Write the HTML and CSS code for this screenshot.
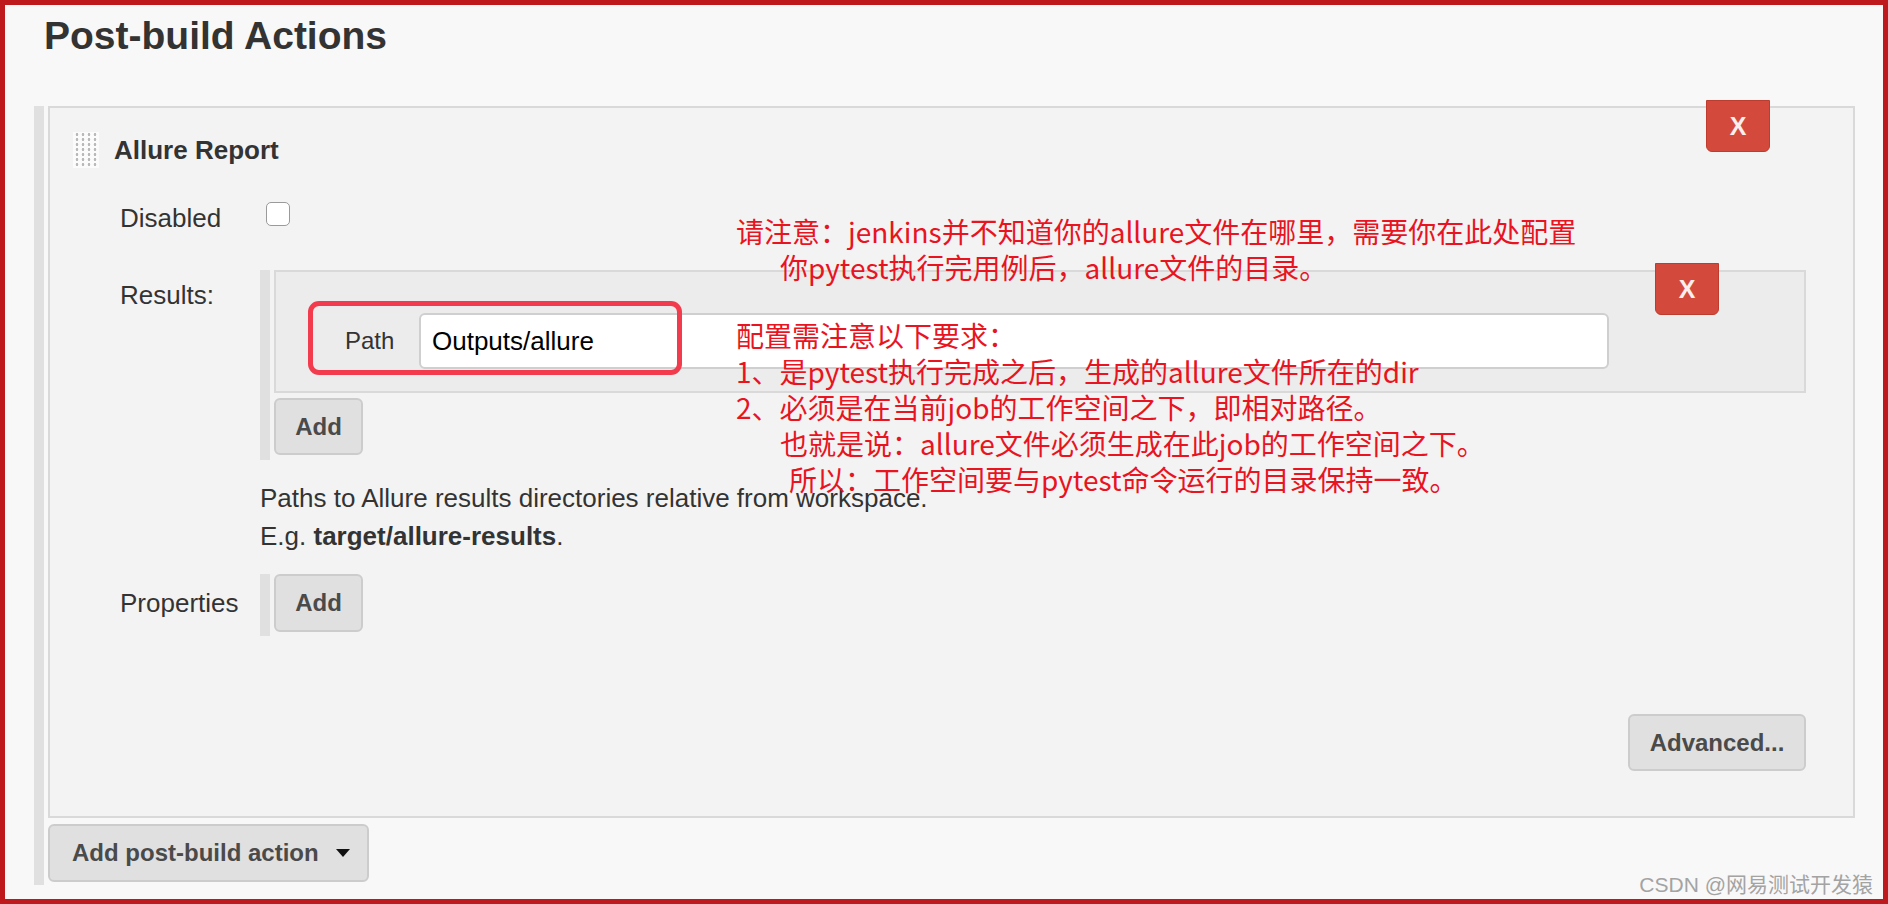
FILE: index.html
```html
<!DOCTYPE html>
<html lang="zh-CN">
<head>
    <meta charset="UTF-8">
    <title>Post-build Actions</title>
    <link rel="stylesheet" href="styles.css">
</head>
<body>
    <div class="page">
        <h1 class="section-title">Post-build Actions</h1>

        <div class="hetero-list">
            <div class="chunk">
                <button class="btn-delete chunk-delete">X</button>

                <div class="chunk-header">
                    <span class="dd-handle"></span>
                    <b>Allure Report</b>
                </div>

                <div class="form-row row-disabled">
                    <label class="setting-name">Disabled</label>
                    <div class="setting-main">
                        <input type="checkbox" class="checkbox">
                    </div>
                </div>

                <div class="form-row row-results">
                    <label class="setting-name">Results:</label>
                    <div class="setting-main">
                        <div class="repeated-container">
                            <div class="repeated-chunk">
                                <button class="btn-delete item-delete">X</button>
                                <div class="path-row">
                                    <label>Path</label>
                                    <input type="text" class="text-input" value="Outputs/allure">
                                </div>
                            </div>
                            <button class="btn btn-add">Add</button>
                        </div>
                        <div class="help">
                            Paths to Allure results directories relative from workspace.<br>
                            E.g. <b>target/allure-results</b>.
                        </div>
                    </div>
                </div>

                <div class="form-row row-properties">
                    <label class="setting-name">Properties</label>
                    <div class="setting-main">
                        <div class="repeated-container short">
                            <button class="btn btn-add">Add</button>
                        </div>
                    </div>
                </div>

                <div class="advanced-row">
                    <button class="btn btn-advanced">Advanced...</button>
                </div>
            </div>

            <button class="btn btn-dropdown">Add post-build action <span class="caret"></span></button>
        </div>

        <!-- 标注 -->
        <div class="note-box"></div>
        <div class="note note-top">
            <div>请注意：jenkins并不知道你的allure文件在哪里，需要你在此处配置</div>
            <div class="indent">你pytest执行完用例后，allure文件的目录。</div>
        </div>
        <div class="note note-bottom">
            <div>配置需注意以下要求：</div>
            <div>1、是pytest执行完成之后，生成的allure文件所在的dir</div>
            <div>2、必须是在当前job的工作空间之下，即相对路径。</div>
            <div class="indent">也就是说：allure文件必须生成在此job的工作空间之下。</div>
            <div class="indent-more">所以：工作空间要与pytest命令运行的目录保持一致。</div>
        </div>

        <div class="watermark">CSDN @网易测试开发猿</div>
    </div>
</body>
</html>
```

FILE: styles.css
```css
html, body {
    margin: 0;
    padding: 0;
}

body {
    font-family: "Liberation Sans", Arial, Helvetica, sans-serif;
    color: #333;
    background: #f8f8f8;
}

.page {
    position: relative;
    box-sizing: border-box;
    height: 904px;
    border: 5px solid #be1a1e;
    padding: 0 28px 0 29px;
    background: #f8f8f8;
}

.section-title {
    margin: 8px 0 48px 10px;
    font-size: 39px;
    line-height: 45px;
    font-weight: bold;
    color: #333;
}

.hetero-list {
    border-left: 10px solid #e0e0e0;
    padding: 0 0 3px 4px;
}

.chunk {
    position: relative;
    border: 2px solid #d9d9d9;
    background: #f3f3f3;
    padding: 24px 47px 45px 70px;
}

.chunk-header {
    display: flex;
    align-items: center;
    margin-left: -47px;
    font-size: 26px;
    line-height: 30px;
}

.dd-handle {
    width: 26px;
    height: 36px;
    margin-right: 15px;
    background-color: #fbfbfb;
    background-image: radial-gradient(circle, #b9b9b9 1.1px, transparent 1.6px);
    background-size: 6px 5px;
    background-position: 1px 0;
}

.btn-delete {
    position: absolute;
    width: 64px;
    height: 52px;
    padding: 0;
    border: 1px solid #bf3b2d;
    border-radius: 0 0 6px 6px;
    background: #d34a3c;
    color: #fbefed;
    font-family: "Liberation Sans", Arial, sans-serif;
    font-size: 25px;
    font-weight: bold;
}

.chunk-delete {
    top: -8px;
    right: 83px;
}

.item-delete {
    top: -9px;
    right: 85px;
}

.form-row {
    display: grid;
    grid-template-columns: 140px 1fr;
    font-size: 26px;
}

.setting-name {
    line-height: 36px;
}

.row-disabled {
    margin-top: 32px;
    height: 36px;
}

.checkbox {
    appearance: none;
    -webkit-appearance: none;
    box-sizing: border-box;
    width: 24px;
    height: 24px;
    margin: 2px 0 0 6px;
    border: 1.5px solid #9a9a9a;
    border-radius: 5px;
    background: #fff;
}

.row-results {
    margin-top: 34px;
}

.row-results .setting-name {
    padding-top: 7px;
}

.repeated-container {
    border-left: 10px solid #e0e0e0;
    padding: 0 0 5px 4px;
}

.repeated-chunk {
    position: relative;
    border: 2px solid #d9d9d9;
    background: #ececec;
    padding: 41px 195px 22px 69px;
}

.path-row {
    display: flex;
    align-items: center;
    font-size: 24px;
}

.path-row label {
    width: 74px;
}

.text-input {
    flex: 1;
    box-sizing: border-box;
    height: 56px;
    padding: 0 11px;
    border: 2px solid #cfcfcf;
    border-radius: 6px;
    background: #fff;
    color: #000;
    font-family: "Liberation Sans", Arial, sans-serif;
    font-size: 26px;
}

.btn {
    box-sizing: border-box;
    border: 2px solid #cccccc;
    border-radius: 6px;
    background: #e0e0e0;
    color: #4a4a4a;
    font-family: "Liberation Sans", Arial, sans-serif;
    font-size: 24px;
    font-weight: bold;
    padding: 0;
}

.btn-add {
    display: block;
    width: 89px;
    height: 57px;
    margin-top: 5px;
}

.help {
    margin-top: 19px;
    line-height: 38px;
    font-size: 26px;
    color: #333;
}

.row-properties {
    margin-top: 19px;
}

.row-properties .setting-name {
    padding-top: 11px;
}

.repeated-container.short {
    padding-bottom: 4px;
    width: fit-content;
}

.repeated-container.short .btn-add {
    height: 58px;
    margin-top: 0;
}

.advanced-row {
    display: flex;
    justify-content: flex-end;
    margin-top: 78px;
}

.btn-advanced {
    width: 178px;
    height: 57px;
}

.btn-dropdown {
    display: flex;
    align-items: center;
    width: 321px;
    height: 58px;
    margin-top: 6px;
    padding-left: 22px;
}

.caret {
    width: 0;
    height: 0;
    margin-left: 17px;
    border-top: 8px solid #111;
    border-left: 7px solid transparent;
    border-right: 7px solid transparent;
}

/* 标注 */
.note-box {
    position: absolute;
    left: 303px;
    top: 296px;
    width: 374px;
    height: 74px;
    box-sizing: border-box;
    border: 5px solid #f23b4c;
    border-radius: 11px;
}

.note {
    position: absolute;
    left: 731px;
    font-family: "Noto Sans CJK SC", sans-serif;
    font-size: 28px;
    line-height: 36px;
    color: #e8141f;
    white-space: nowrap;
}

.note-top {
    top: 208px;
}

.note-bottom {
    top: 312px;
}

.note .indent {
    padding-left: 44px;
}

.note .indent-more {
    padding-left: 53px;
}

.watermark {
    position: absolute;
    right: 10px;
    bottom: 2px;
    font-family: "Liberation Sans", "Noto Sans CJK SC", sans-serif;
    font-size: 21px;
    line-height: 24px;
    color: #a3a3a3;
}
```
